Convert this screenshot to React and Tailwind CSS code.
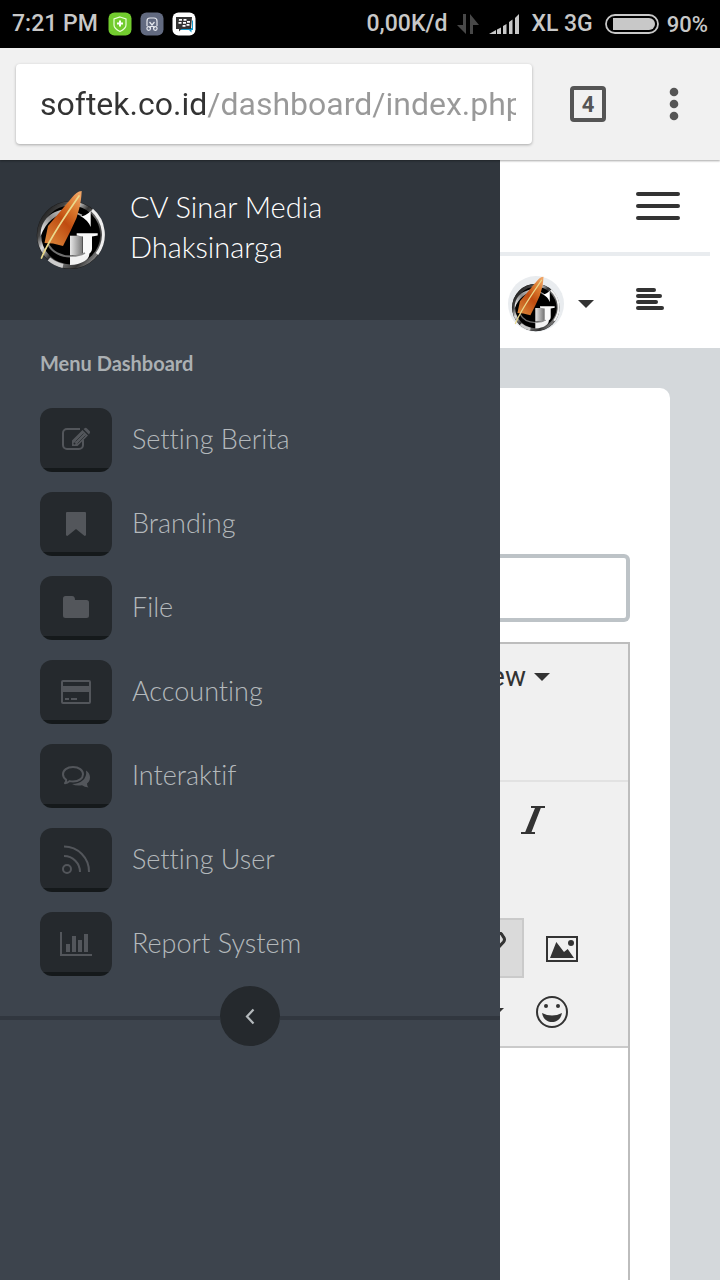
import React from "react";

const FeatherLogo = ({ className, id }) => (
  <svg viewBox="0 0 70 80" className={className} aria-hidden="true">
    <defs>
      <linearGradient id={`${id}-ring`} x1="0" y1="0.1" x2="1" y2="0.9">
        <stop offset="0" stopColor="#111" />
        <stop offset="0.2" stopColor="#444" />
        <stop offset="0.32" stopColor="#ddd" />
        <stop offset="0.46" stopColor="#333" />
        <stop offset="0.62" stopColor="#777" />
        <stop offset="0.8" stopColor="#333" />
        <stop offset="1" stopColor="#bbb" />
      </linearGradient>
      <linearGradient id={`${id}-box`} x1="0" y1="0" x2="1" y2="0">
        <stop offset="0" stopColor="#e8e8e8" />
        <stop offset="1" stopColor="#777" />
      </linearGradient>
      <linearGradient id={`${id}-arc`} x1="0" y1="1" x2="1" y2="0">
        <stop offset="0" stopColor="#ffffff" />
        <stop offset="0.5" stopColor="#8a8a8a" />
        <stop offset="1" stopColor="#dcdcdc" />
      </linearGradient>
      <linearGradient id={`${id}-quill`} x1="0.9" y1="0" x2="0.2" y2="1">
        <stop offset="0" stopColor="#f0a566" />
        <stop offset="0.3" stopColor="#d9752a" />
        <stop offset="0.55" stopColor="#bf4c10" />
        <stop offset="1" stopColor="#d98238" />
      </linearGradient>
    </defs>
    <circle cx="34.7" cy="45" r="34" fill="#1c1c1c" />
    <circle cx="34.7" cy="45" r="31.500" fill="#000" stroke={`url(#${id}-ring)`} strokeWidth="4" />
    <path d="M56 20A32.500 32.500 0 0 1 61 64" fill="none" stroke="#eee" strokeWidth="3" />
    <path d="M13 69A32 32 0 0 0 27 76" fill="none" stroke="#ccc" strokeWidth="4" />
    <path d="M4.700 46C4 30 16 19 34 19v4C20 23 10 32 4.700 46z" fill={`url(#${id}-arc)`} />
    <path d="M36 22.500q6 .5 10 3" fill="none" stroke="#aaa" strokeWidth="1.600" />
    <path d="M43.500 25.500q3 1.500 6-.5 3-1.500 5.200-4V37Q52 30 43.500 25.500z" fill="#fff" />
    <path d="M12 54c4 8 13 13 24 12.500" fill="none" stroke="#707070" strokeWidth="2" />
    <path d="M34 45.700h12.700V65H34z" fill={`url(#${id}-box)`} />
    <path d="M34 66q7 .5 13-2l1-1.500 5 .5c2 5-6 12-19 12z" fill="#f2f2f2" />
    <path d="M40.700 43.300h21v2.200L56 46.500V59q0 5-9 7.500V46.500l-6.300-1z" fill="#fafafa" />
    <path d="M34 66q9 .5 15-3" fill="none" stroke="#8c8c8c" strokeWidth="1.500" />
    <path d="M45.700 1C42 1 39 4 36 7.500L12 36 8.500 53l8.500.5 4 1 6 1.500 7.500-15 6-13c2-7 4.500-13 5.200-27z" fill={`url(#${id}-quill)`} />
    <path d="M43 6C30 25 14 47 5.500 68" fill="none" stroke="#ead98c" strokeWidth="1.700" strokeLinecap="round" />
  </svg>
);

const EditIcon = () => (
  <>
    <path d="M22 7H9a4 4 0 0 0-4 4v12a4 4 0 0 0 4 4h12a4 4 0 0 0 4-4v-5" fill="none" stroke="currentColor" strokeWidth="2" />
    <path d="M14 24v-5.500L24.500 8l5.500 5.500L19.500 24zM25.500 7l1.500-1q1-.6 2 .4L31.600 9q1 1 .2 2L31 12.500z" fill="currentColor" />
    <path d="M17.500 19.500l8-8M19.500 21.500l8-8" stroke="#25292d" strokeWidth=".7" />
    <circle cx="16.500" cy="21.500" r="1" fill="#25292d" />
  </>
);
const BookmarkIcon = () => (
  <path d="M9 6h18a1 1 0 0 1 1 1v22q-1 1.500-2 .5l-8-6.500-8 6.500q-1 1-2-.5V7a1 1 0 0 1 1-1z" fill="currentColor" />
);
const FolderIcon = () => (
  <path d="M7.500 6H14q3 0 3 4h11.500A2.500 2.500 0 0 1 31 12.500v13a2.500 2.500 0 0 1-2.500 2.500h-21A2.500 2.500 0 0 1 5 25.500v-17A2.500 2.500 0 0 1 7.500 6z" fill="currentColor" />
);
const CardIcon = () => (
  <>
    <rect x="4" y="7" width="28" height="22" rx="1" fill="none" stroke="currentColor" strokeWidth="2" />
    <path d="M4 12h28v6H4zM7 24h4v2H7zM13 24h6v2h-6z" fill="currentColor" />
  </>
);
const ChatIcon = () => (
  <>
    <path d="M15 9c6 0 10 3.200 10 7.200s-4 7.300-10 7.300q-2 0-3.500-.4Q9.500 25 7 25.200q1.300-1.500 1.200-3.500Q5 19.500 5 16.200C5 12.200 9 9 15 9z" fill="none" stroke="currentColor" strokeWidth="2" strokeLinejoin="round" />
    <path d="M28 12.500c3 2 4 4.500 4 7 0 3-1.500 4.700-3 6q0 2.500 1.500 4-4-.2-6.500-2.300-6 1-10-1.200 7-.2 10.500-3.500Q29 19 28 12.500z" fill="currentColor" />
  </>
);
const FeedIcon = () => (
  <g fill="none" stroke="currentColor" strokeWidth="2">
    <path d="M6 4.500A25 25 0 0 1 31 30M6 14a16 16 0 0 1 16 16" />
    <circle cx="9" cy="27" r="4" />
  </g>
);
const ChartIcon = () => (
  <path d="M2 6h2v22h30v2H2zM8 18h4v8H8zM14 10h4v16h-4zM20 14h4v12h-4zM26 8h4v18h-4z" fill="currentColor" />
);

const menu = [
  ["Setting Berita", EditIcon],
  ["Branding", BookmarkIcon],
  ["File", FolderIcon],
  ["Accounting", CardIcon],
  ["Interaktif", ChatIcon],
  ["Setting User", FeedIcon],
  ["Report System", ChartIcon],
];

const Caret = () => (
  <svg viewBox="0 0 16 8" className="h-2 w-4 shrink-0" aria-hidden="true">
    <path d="M0 0h16L8 8z" fill="currentColor" />
  </svg>
);

function StatusBar() {
  return (
    <div className="flex h-12 shrink-0 items-center justify-between bg-black px-3 text-[23px] font-medium text-[#c8c8c8]">
      <div className="flex items-center gap-2">
        <span className="mr-0.5">7:21 PM</span>
        <svg viewBox="0 0 24 24" className="size-6" aria-hidden="true">
          <rect x="0.500" y="0.500" width="23" height="23" rx="6" fill="#72cc2e" />
          <path d="M12 5l6 2v6c0 3-3 5-6 6.500C9 18 6 16 6 13V7z" fill="none" stroke="#e9ffd9" strokeWidth="1.200" />
          <path d="M12 8.500v6M9 11.500h6" stroke="#fff" strokeWidth="2" />
        </svg>
        <svg viewBox="0 0 24 24" className="size-6" aria-hidden="true">
          <rect x="0.500" y="0.500" width="23" height="23" rx="6" fill="#626a80" />
          <path d="M7 14V9q0-3 3-3h4q3 0 3 3v5M9.500 10l5 6M14.500 10l-5 6" fill="none" stroke="#e6e8ee" strokeWidth="1.200" />
          <circle cx="8.700" cy="16.500" r="1.800" fill="none" stroke="#e6e8ee" strokeWidth="1.200" />
          <circle cx="15.300" cy="16.500" r="1.800" fill="none" stroke="#e6e8ee" strokeWidth="1.200" />
        </svg>
        <svg viewBox="0 0 24 24" className="size-6" aria-hidden="true">
          <rect x="0.500" y="0.500" width="23" height="23" rx="6" fill="#fff" />
          <path d="M20 8l1 1v9h-1.500v2.500L17 18H9v-2h11z" fill="#139bd0" />
          <path d="M4 5h16l-1 12H9.500L7 19.500V17H4z" fill="#333" />
          <path d="M7 7h3v1.700H6.800zM11.500 7h3v1.700h-3zM6.500 10h3v1.700h-3zM11 10h3v1.700h-3zM15 9h3v1.700h-3zM14.500 12h3v1.700h-3zM10.500 13h3v1.700h-3z" fill="#fff" />
        </svg>
      </div>
      <div className="flex items-center">
        <span>0,00K/d</span>
        <svg viewBox="0 0 22 20" className="ml-2.5 h-5 w-[22px]" aria-hidden="true">
          <path d="M6 0h3v20L0 11h6zM13 20h3v-9h6L13 0z" fill="#484848" />
        </svg>
        <svg viewBox="0 0 30 20" className="ml-2.5 h-5 w-[30px]" aria-hidden="true">
          <path d="M0 20l7-4v4zM8 15.500l4-2V20H8zM14 12l3.500-2v10H14zM20 8l3.500-2.500V20H20zM26 4l4-4v20h-4z" fill="#c8c8c8" />
        </svg>
        <span className="ml-3">XL 3G</span>
        <svg viewBox="0 0 54 20" className="ml-3 h-5 w-[54px]" aria-hidden="true">
          <rect x="1" y="1" width="52" height="18" rx="9" fill="none" stroke="#c8c8c8" strokeWidth="1.800" />
          <path d="M8 4h36a6 6 0 0 1 0 12H8z" fill="#c8c8c8" />
        </svg>
        <span className="ml-2 text-[22px]">90%</span>
      </div>
    </div>
  );
}

function BrowserBar() {
  return (
    <div className="relative z-10 flex h-28 shrink-0 items-center bg-[#f1f1f1] pl-4 pr-[26px] shadow-[0_1px_2px_rgba(0,0,0,0.35)]">
      <div className="flex h-20 min-w-0 flex-1 items-center rounded bg-white pl-6 pr-4 shadow-[0_1px_3px_rgba(0,0,0,0.3)]">
        <input
          type="text"
          aria-label="Address"
          defaultValue="softek.co.id/dashboard/index.php"
          className="h-12 w-full bg-[linear-gradient(90deg,#333_166px,#999_166px)] bg-clip-text text-[32px] text-transparent outline-none"
        />
      </div>
      <button type="button" aria-label="Open tabs" className="ml-[38px] flex size-9 items-center justify-center rounded border-4 border-[#555] text-[22px] font-bold text-[#555]">
        4
      </button>
      <button type="button" aria-label="More options" className="ml-12 flex h-9 w-10 items-center justify-center">
        <svg viewBox="0 0 10 34" className="h-[34px] w-2.5" aria-hidden="true">
          <g fill="#555">
            <circle cx="5" cy="5" r="4.300" />
            <circle cx="5" cy="17" r="4.300" />
            <circle cx="5" cy="29" r="4.300" />
          </g>
        </svg>
      </button>
    </div>
  );
}

function Sidebar() {
  return (
    <aside className="w-[500px] shrink-0 bg-[#3d444d] font-[Lato,sans-serif] [font-variant-ligatures:none]">
      <div className="flex h-40 items-start bg-[#30363d] pl-9 pt-[27px]">
        <FeatherLogo id="brand" className="mt-[3px] h-20 w-[70px] shrink-0" />
        <h1 className="ml-6 w-60 text-[29px] font-light leading-10 text-white">
          CV Sinar Media Dhaksinarga
        </h1>
      </div>
      <nav className="px-10 pt-[27px]">
        <h2 className="text-xl font-bold leading-8 text-[#abb0b3]">Menu Dashboard</h2>
        <ul className="mt-[29px] flex flex-col gap-5">
          {menu.map(([label, Icon]) => (
            <li key={label}>
              <a href="#" className="flex items-center gap-5 text-[27px] font-light text-[#b4b9bc]">
                <span className="flex h-16 w-[72px] items-center justify-center rounded-xl bg-[linear-gradient(#25292d_60px,#15191b_60px)] pb-1 text-[#53565b]">
                  <svg viewBox="0 0 36 32" className="h-8 w-9" aria-hidden="true">
                    <Icon />
                  </svg>
                </span>
                <span className="pb-0.5">{label}</span>
              </a>
            </li>
          ))}
        </ul>
      </nav>
      <div className="mt-2.5 flex items-center">
        <div className="h-2 flex-1 border-b-4 border-[#31373f]" />
        <button type="button" aria-label="Collapse menu" className="flex size-[60px] items-center justify-center rounded-full bg-[#25292d]">
          <svg viewBox="0 0 10 18" className="h-[18px] w-2.5" aria-hidden="true">
            <path d="M8.500 2.500L2 9.500l6.500 7" fill="none" stroke="#b4b9bc" strokeWidth="2.200" />
          </svg>
        </button>
        <div className="h-2 flex-1 border-b-4 border-[#31373f]" />
      </div>
    </aside>
  );
}

function Editor() {
  return (
    <div className="mt-5 flex flex-1 flex-col border-r-2 border-t-2 border-[#bdbdbd]">
      <div className="bg-[#f0f0f0]">
        <div className="flex h-[138px] justify-end border-b-2 border-[#e2e2e2] pr-[78px] pt-[3px]">
          <button type="button" className="flex h-[60px] shrink-0 items-center gap-2 text-[28px]">
            View
            <Caret />
          </button>
        </div>
        <div className="border-b-2 border-[#cacaca] pb-1 pt-2">
          <div className="flex justify-end pr-[65px]">
            <button type="button" aria-label="Italic" className="flex size-[60px] items-center justify-center">
              <svg viewBox="0 0 24 28" className="h-7 w-6" aria-hidden="true">
                <path d="M10 0h14v2h-4.200L10.500 26H14v2H0v-2h4.200L14 2h-4z" fill="currentColor" />
              </svg>
            </button>
          </div>
          <div className="mt-[68px] flex justify-end pr-7">
            <button type="button" aria-label="Insert link" className="flex size-[60px] shrink-0 items-center justify-center border-2 border-[#cacaca] bg-[#dadada]">
              <svg viewBox="0 0 32 32" className="size-8" aria-hidden="true">
                <path d="M14 5l4-3.500q3-2 5.500.5l2 3q2 2.500 0 5L19 17l-4 1M18 26l-4 3.500q-3 2-5.500-.5l-2-3q-2-2.500 0-5L13 14l4-1" fill="none" stroke="currentColor" strokeWidth="3" />
              </svg>
            </button>
            <button type="button" aria-label="Insert image" className="flex h-[60px] w-[76px] shrink-0 items-center justify-center pt-0.5">
              <svg viewBox="0 0 32 26" className="h-[26px] w-8" aria-hidden="true">
                <rect x="1" y="1" width="30" height="24" fill="none" stroke="currentColor" strokeWidth="2" />
                <path d="M4 22l6.300-16 7.700 10 3.700-3L28 22z" fill="currentColor" />
                <circle cx="25" cy="7" r="3" fill="currentColor" />
              </svg>
            </button>
          </div>
          <div className="mt-1 flex justify-end pr-[46px]">
            <button type="button" aria-label="More formats" className="flex h-[60px] w-[52px] shrink-0 items-center justify-center">
              <Caret />
            </button>
            <button type="button" aria-label="Insert emoticon" className="flex size-[60px] shrink-0 items-center justify-center">
              <svg viewBox="0 0 32 32" className="size-8" aria-hidden="true">
                <circle cx="16" cy="16" r="15" fill="none" stroke="currentColor" strokeWidth="2" />
                <circle cx="10" cy="10" r="2" fill="currentColor" />
                <circle cx="22" cy="10" r="2" fill="currentColor" />
                <path d="M6 17q10 5 20 0c-1 6-5.500 9-10 9S7 23 6 17z" fill="currentColor" />
              </svg>
            </button>
          </div>
        </div>
      </div>
      <div className="flex-1 bg-white" />
    </div>
  );
}

function Content() {
  return (
    <main className="flex min-w-0 flex-1 flex-col overflow-hidden bg-[#d4d8db] text-[#333]">
      <header className="bg-white">
        <div className="mr-2.5 flex h-24 items-center justify-end border-b-4 border-[#e9ecef] pr-[30px]">
          <button type="button" aria-label="Toggle navigation" className="flex w-11 flex-col gap-2">
            <span className="h-1 rounded-full bg-[#333]" />
            <span className="h-1 rounded-full bg-[#333]" />
            <span className="h-1 rounded-full bg-[#333]" />
          </button>
        </div>
        <div className="flex items-center justify-end pb-4 pr-14 pt-5">
          <button type="button" aria-label="Account" className="flex shrink-0 items-center gap-3.5">
            <span className="flex size-14 items-center justify-center rounded-full bg-[#e9ecef]">
              <FeatherLogo id="avatar" className="h-14 w-[50px]" />
            </span>
            <Caret />
          </button>
          <button type="button" aria-label="Panel menu" className="ml-[42px] flex w-7 shrink-0 flex-col gap-0.5 pb-2.5">
            <span className="h-1 w-5 rounded-full bg-[#333]" />
            <span className="h-1 w-[26px] rounded-full bg-[#333]" />
            <span className="h-1 w-[22px] rounded-full bg-[#333]" />
            <span className="h-1 w-7 rounded-full bg-[#333]" />
          </button>
        </div>
      </header>
      <div className="flex flex-1 flex-col pr-[50px] pt-10">
        <section className="flex flex-1 flex-col rounded-tr-[10px] bg-white pr-10 pt-[166px]">
          <input type="text" aria-label="Title" className="h-[68px] w-full rounded-r-md border-4 border-l-0 border-[#bdc3c7] bg-white px-4 text-2xl outline-none" />
          <Editor />
        </section>
      </div>
    </main>
  );
}

export default function App() {
  return (
    <div className="flex min-h-screen flex-col font-[Roboto,sans-serif]">
      <StatusBar />
      <BrowserBar />
      <div className="flex flex-1">
        <Sidebar />
        <Content />
      </div>
    </div>
  );
}
